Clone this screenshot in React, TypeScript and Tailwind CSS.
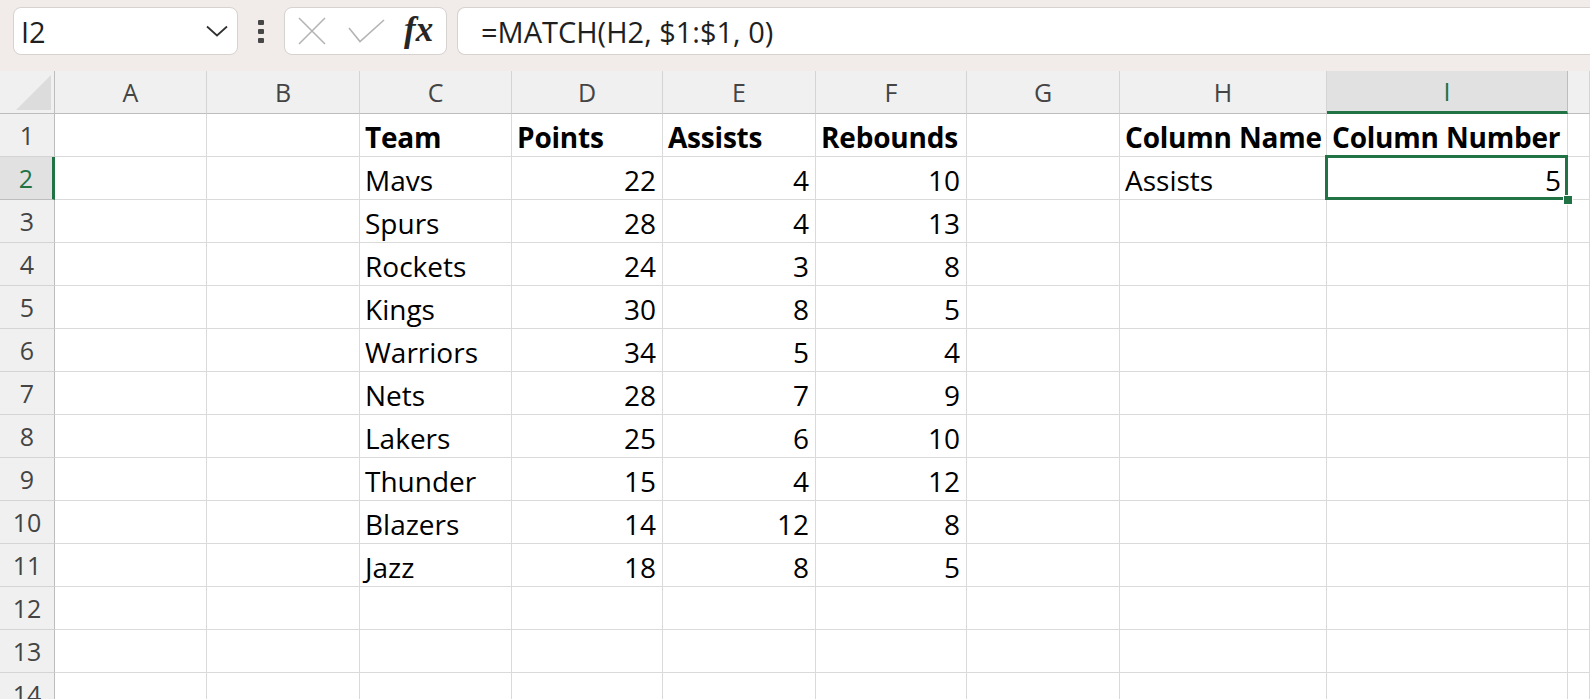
import React from 'react'

const cols = ['A', 'B', 'C', 'D', 'E', 'F', 'G', 'H', 'I', '']

const table = [
    ['Mavs', 22, 4, 10],
    ['Spurs', 28, 4, 13],
    ['Rockets', 24, 3, 8],
    ['Kings', 30, 8, 5],
    ['Warriors', 34, 5, 4],
    ['Nets', 28, 7, 9],
    ['Lakers', 25, 6, 10],
    ['Thunder', 15, 4, 12],
    ['Blazers', 14, 12, 8],
    ['Jazz', 18, 8, 5],
]

type Cell = { text?: string | number, bold?: boolean, right?: boolean }

// builds the cell contents for a given row (1-based)
function rowCells(r: number): Cell[] {
    const cells: Cell[] = cols.map(() => ({}))
    if (r === 1) {
        cells[2] = { text: 'Team', bold: true }
        cells[3] = { text: 'Points', bold: true }
        cells[4] = { text: 'Assists', bold: true }
        cells[5] = { text: 'Rebounds', bold: true }
        cells[7] = { text: 'Column Name', bold: true }
        cells[8] = { text: 'Column Number', bold: true }
    } else if (r >= 2 && r <= 11) {
        const d = table[r - 2]
        cells[2] = { text: d[0] }
        cells[3] = { text: d[1], right: true }
        cells[4] = { text: d[2], right: true }
        cells[5] = { text: d[3], right: true }
    }
    if (r === 2) {
        cells[7] = { text: 'Assists' }
        cells[8] = { text: 5, right: true }
    }
    return cells
}

const gridCols = 'grid grid-cols-[55px_152px_153px_152px_151px_153px_151px_153px_207px_241px_1fr]'

function TopBar() {
    return (
        <div className="flex items-start h-[71px] bg-[#f1ebe9] pt-[7px] pl-[13px]">
            {/* name box */}
            <div className="flex items-center justify-between w-[225px] h-[48px] bg-white border border-[#d6d2d0] rounded-[8px] pl-[7px] pr-[9px]">
                <span className="text-[29px] text-[#1f1f1f] leading-none">I2</span>
                <svg width="22" height="12" viewBox="0 0 22 12" fill="none">
                    <path d="M1 1.5 L11 10.5 L21 1.5" stroke="#303030" strokeWidth="1.7" />
                </svg>
            </div>

            {/* dots */}
            <div className="flex flex-col gap-[4px] ml-[20px] mt-[13px]">
                <div className="w-[6px] h-[5px] bg-[#474747] rounded-[1px]"></div>
                <div className="w-[6px] h-[5px] bg-[#474747] rounded-[1px]"></div>
                <div className="w-[6px] h-[5px] bg-[#474747] rounded-[1px]"></div>
            </div>

            {/* cancel / enter / fx */}
            <div className="flex items-center w-[163px] h-[48px] ml-[20px] bg-white border border-[#d6d2d0] rounded-[8px] pl-[13px]">
                <svg width="28" height="28" viewBox="0 0 28 28" fill="none">
                    <path d="M1 1 L27 27 M27 1 L1 27" stroke="#b4b4b4" strokeWidth="1.6" />
                </svg>
                <svg width="37" height="24" viewBox="0 0 37 24" fill="none" className="ml-[22px]">
                    <path d="M1 9 L12 22.5 L36 1" stroke="#b4b4b4" strokeWidth="1.6" />
                </svg>
                <span className="ml-[19px] text-[35px] italic font-bold text-[#262626] leading-none -mt-[4px]" style={{ fontFamily: '"Liberation Serif", "DejaVu Serif", serif' }}>fx</span>
            </div>

            {/* formula box */}
            <div className="flex items-center flex-1 h-[48px] ml-[10px] bg-white border border-r-0 border-[#d6d2d0] rounded-l-[8px] pl-[23px]">
                <span className="text-[29px] text-[#1f1f1f] leading-none">=MATCH(H2, $1:$1, 0)</span>
            </div>
        </div>
    )
}

function HeaderRow() {
    return (
        <div className={`${gridCols} h-[43px]`}>
            <div className="relative bg-[#f0f0f0] border-r border-b border-[#bdbdbd]">
                <svg width="35" height="35" viewBox="0 0 35 35" className="absolute right-[3px] bottom-[3px]">
                    <path d="M0 35 L35 0 L35 35 Z" fill="#dcdcdc" />
                </svg>
            </div>
            {cols.map((c, i) => (
                c === 'I' ? (
                    <div key={i} className="flex items-center justify-center bg-[#e1e1e1] border-r border-[#bdbdbd] border-b-[3px] border-b-[#217346] text-[25px] text-[#217346] pt-[2px]">{c}</div>
                ) : (
                    <div key={i} className="flex items-center justify-center bg-[#f0f0f0] border-r border-b border-[#d4d4d4] border-b-[#bdbdbd] text-[25px] text-[#444444] pt-[1px]">{c}</div>
                )
            ))}
        </div>
    )
}

function Row({ r }: { r: number }) {
    const cells = rowCells(r)
    const sel = r === 2
    return (
        <div className={`${gridCols} h-[43px]`}>
            {sel ? (
                <div className="flex items-center justify-center bg-[#e1e1e1] border-b border-[#bdbdbd] border-r-[3px] border-r-[#217346] text-[25px] text-[#217346] pt-[2px]">{r}</div>
            ) : (
                <div className="flex items-center justify-center bg-[#f0f0f0] border-b border-r border-[#d4d4d4] border-r-[#bdbdbd] text-[25px] text-[#444444] pt-[2px]">{r}</div>
            )}
            {cells.map((cell, i) => {
                const isSel = sel && i === 8
                return (
                    <div key={i} className={`relative flex items-end border-r border-b border-[#dadada] whitespace-nowrap overflow-visible ${cell.right ? 'justify-end pr-[6px]' : 'pl-[5px]'}`}>
                        <span className={`text-[28px] leading-[38px] text-black ${cell.bold ? 'font-bold tracking-[-0.2px]' : ''}`}>{cell.text}</span>
                        {isSel && (
                            <>
                                <div className="absolute z-10 -left-[2px] -top-[2px] -right-[1px] -bottom-[1px] border-[3px] border-[#217346] pointer-events-none"></div>
                                <div className="absolute z-20 -right-[6px] -bottom-[6px] w-[10px] h-[10px] bg-[#217346] border-[1.5px] border-white"></div>
                            </>
                        )}
                    </div>
                )
            })}
        </div>
    )
}

export default function App() {
    const rows = Array.from({ length: 14 }, (_, i) => i + 1)
    return (
        <div className="w-[1590px] h-[699px] overflow-hidden bg-white" style={{ fontFamily: '"Open Sans", "Noto Sans", sans-serif' }}>
            <TopBar />
            <HeaderRow />
            {rows.map((r) => <Row key={r} r={r} />)}
        </div>
    )
}
